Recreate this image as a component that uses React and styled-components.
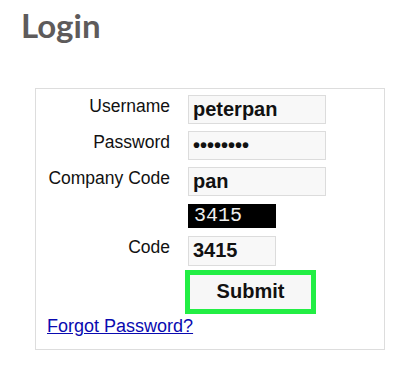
import React from "react";
import styled, { createGlobalStyle } from "styled-components";

const GlobalStyle = createGlobalStyle`
    body {
        margin: 0;
        background: #ffffff;
        font-family: "Liberation Sans", Arial, sans-serif;
    }
`;

function App() {
    return (
        <>
            <GlobalStyle />
            <StPage>
                <StTitle>Login</StTitle>
                <StBox>
                    <StForm>
                        <StLabel>Username</StLabel>
                        <StInput type="text" defaultValue="peterpan" readOnly />

                        <StLabel>Password</StLabel>
                        <StInput type="password" defaultValue="peterpan" readOnly />

                        <StLabel>Company Code</StLabel>
                        <StInput type="text" defaultValue="pan" readOnly />

                        <span />
                        <StCaptcha>3415</StCaptcha>

                        <StLabel $top={1}>Code</StLabel>
                        <StInput type="text" defaultValue="3415" readOnly $short $top={1} />

                        <span />
                        <StSubmit type="button">Submit</StSubmit>

                        <StLink href="#">Forgot Password?</StLink>
                    </StForm>
                </StBox>
            </StPage>
        </>
    );
}

const StPage = styled.div`
    padding: 6px 30px 0 21px;
`;

const StTitle = styled.h1`
    margin: 0;
    font-family: Lato, "Open Sans", sans-serif;
    font-weight: 700;
    font-size: 33px;
    line-height: 1.2;
    color: #5e5b5b;
`;

const StBox = styled.div`
    margin: 42px 0 0 14px;
    width: 350px;
    height: 262px;
    box-sizing: border-box;
    border: 1px solid #dddddd;
    padding: 6px 11px 0;
`;

const StForm = styled.div`
    display: grid;
    grid-template-columns: 123px 1fr;
    column-gap: 18px;
    row-gap: 7px;
    align-items: start;
`;

const StLabel = styled.label`
    margin-top: ${(p) => p.$top || 0}px;
    padding-top: 1px;
    text-align: right;
    font-size: 17.5px;
    color: #111111;
`;

const StInput = styled.input`
    margin: ${(p) => p.$top || 0}px 0 0;
    width: ${(p) => (p.$short ? 88 : 138)}px;
    height: ${(p) => (p.$short ? 30 : 29)}px;
    box-sizing: border-box;
    border: 1px solid #dcdcdc;
    background: #f8f8f8;
    padding: 0 4px;
    font-family: "Liberation Sans", Arial, sans-serif;
    font-weight: 700;
    font-size: 20px;
    color: #111111;
    outline: none;
`;

const StCaptcha = styled.div`
    margin-top: 1px;
    width: 88px;
    height: 24px;
    box-sizing: border-box;
    padding-left: 6px;
    background: #000000;
    color: #eeeeee;
    font-family: "Liberation Mono", monospace;
    font-size: 20px;
    line-height: 24px;
`;

const StSubmit = styled.button`
    margin: -3px 0 0 -3px;
    width: 131px;
    height: 44px;
    box-sizing: border-box;
    border: 5px solid #22ee44;
    background: #f7f7f7;
    font-family: "Liberation Sans", Arial, sans-serif;
    font-weight: 700;
    font-size: 20px;
    color: #111111;
    padding: 0;
`;

const StLink = styled.a`
    grid-column: 1 / -1;
    margin-top: -5px;
    justify-self: start;
    font-size: 18px;
    color: #0a0ab0;
    text-decoration: underline;
`;

export default App;
